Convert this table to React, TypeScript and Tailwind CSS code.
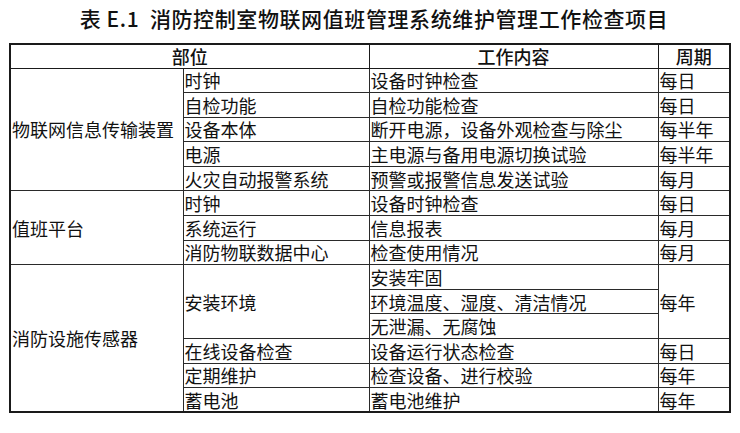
import React from "react";

const font = { fontFamily: '"Noto Sans CJK SC", "Noto Sans", sans-serif' };

type Row = {
  c1?: { text: string; span: number };
  c2?: { text: string; span: number };
  c3: string;
  c4?: { text: string; span: number };
};

const rows: Row[] = [
  { c1: { text: "物联网信息传输装置", span: 5 }, c2: { text: "时钟", span: 1 }, c3: "设备时钟检查", c4: { text: "每日", span: 1 } },
  { c2: { text: "自检功能", span: 1 }, c3: "自检功能检查", c4: { text: "每日", span: 1 } },
  { c2: { text: "设备本体", span: 1 }, c3: "断开电源，设备外观检查与除尘", c4: { text: "每半年", span: 1 } },
  { c2: { text: "电源", span: 1 }, c3: "主电源与备用电源切换试验", c4: { text: "每半年", span: 1 } },
  { c2: { text: "火灾自动报警系统", span: 1 }, c3: "预警或报警信息发送试验", c4: { text: "每月", span: 1 } },
  { c1: { text: "值班平台", span: 3 }, c2: { text: "时钟", span: 1 }, c3: "设备时钟检查", c4: { text: "每日", span: 1 } },
  { c2: { text: "系统运行", span: 1 }, c3: "信息报表", c4: { text: "每月", span: 1 } },
  { c2: { text: "消防物联数据中心", span: 1 }, c3: "检查使用情况", c4: { text: "每月", span: 1 } },
  { c1: { text: "消防设施传感器", span: 6 }, c2: { text: "安装环境", span: 3 }, c3: "安装牢固", c4: { text: "每年", span: 3 } },
  { c3: "环境温度、湿度、清洁情况" },
  { c3: "无泄漏、无腐蚀" },
  { c2: { text: "在线设备检查", span: 1 }, c3: "设备运行状态检查", c4: { text: "每日", span: 1 } },
  { c2: { text: "定期维护", span: 1 }, c3: "检查设备、进行校验", c4: { text: "每年", span: 1 } },
  { c2: { text: "蓄电池", span: 1 }, c3: "蓄电池维护", c4: { text: "每年", span: 1 } },
];

const td = "border border-[#2a2a2a] px-[1px] py-0 text-left align-middle whitespace-nowrap";

export default function App() {
  return (
    <div className="w-[740px] h-[433px] bg-white text-[#111]" style={font}>
      <div className="h-[36px] flex items-center justify-center text-[21px] font-medium tracking-[0.6px] leading-none pt-[1px] pl-[8px]">
        表 E.1&nbsp; 消防控制室物联网值班管理系统维护管理工作检查项目
      </div>
      <table className="ml-[9px] mt-[7px] w-[720px] table-fixed border-collapse border-2 border-[#1a1a1a] text-[18px] leading-none">
        <colgroup>
          <col className="w-[173px]" />
          <col className="w-[186px]" />
          <col className="w-[289px]" />
          <col className="w-[72px]" />
        </colgroup>
        <thead>
          <tr className="h-[24px]">
            <th colSpan={2} className="border border-[#1a1a1a] font-medium text-center p-0">部位</th>
            <th className="border border-[#1a1a1a] font-medium text-center p-0">工作内容</th>
            <th className="border border-[#1a1a1a] font-medium text-center p-0">周期</th>
          </tr>
        </thead>
        <tbody>
          {rows.map((r, i) => (
            <tr key={i} className="h-[24.6px]">
              {r.c1 && (
                <td rowSpan={r.c1.span} className={td}>{r.c1.text}</td>
              )}
              {r.c2 && (
                <td rowSpan={r.c2.span} className={td}>{r.c2.text}</td>
              )}
              <td className={td}>{r.c3}</td>
              {r.c4 && (
                <td rowSpan={r.c4.span} className={td}>{r.c4.text}</td>
              )}
            </tr>
          ))}
        </tbody>
      </table>
    </div>
  );
}
